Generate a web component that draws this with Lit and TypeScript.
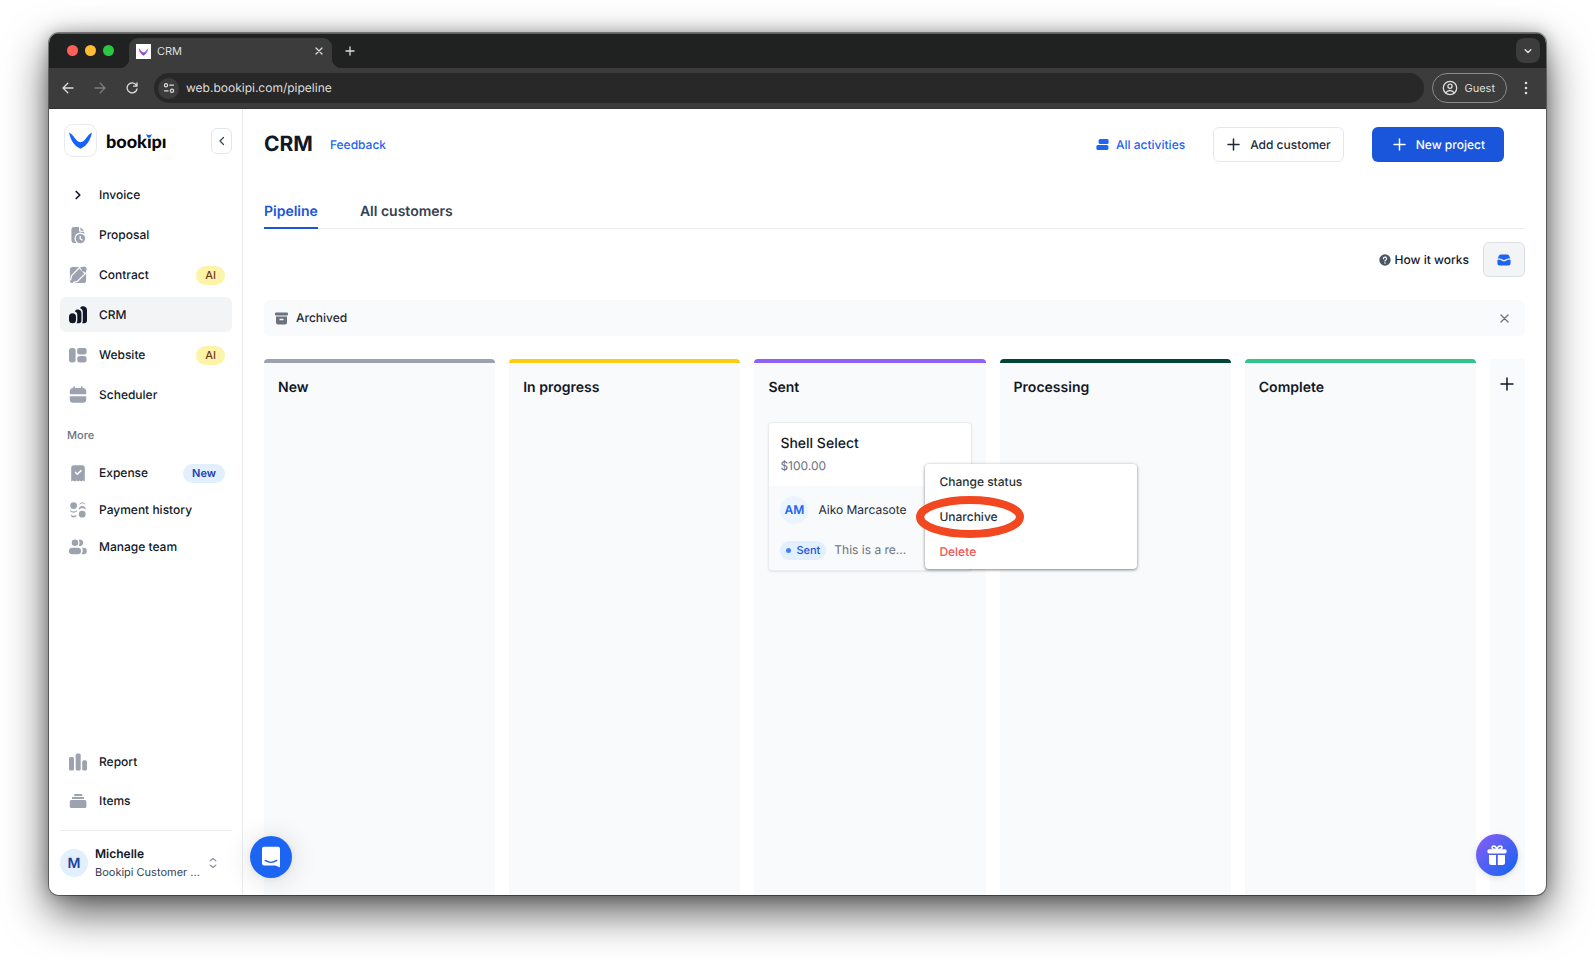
import { LitElement, html, css, svg, nothing } from "lit";
import { customElement } from "lit/decorators.js";
import { classMap } from "lit/directives/class-map.js";
import { styleMap } from "lit/directives/style-map.js";

const base = css`
  *, *::before, *::after { box-sizing: border-box; }
  :host { font-family: Inter, "Liberation Sans", sans-serif; color: #111827; text-rendering: geometricPrecision; }
  a { color: inherit; text-decoration: none; }
  button { font: inherit; color: inherit; margin: 0; padding: 0; border: 0; background: none; cursor: pointer; text-rendering: inherit; }
  h1, h2, h3, p, ul { margin: 0; padding: 0; list-style: none; }
  svg { display: block; flex: none; }
`;

const icon = (size: number, body: unknown, stroke = 0) => html`<svg
  width=${size} height=${size} viewBox="0 0 ${size} ${size}" aria-hidden="true"
  fill=${stroke ? "none" : "currentColor"} stroke=${stroke ? "currentColor" : "none"}
  stroke-width=${stroke || 0} stroke-linecap="round" stroke-linejoin="round">${body}</svg>`;

const plus = (size: number, weight = 1.6) =>
  icon(size, svg`<path d="M${size / 2} 1V${size - 1}M1 ${size / 2}H${size - 1}"/>`, weight);

const cross = (size: number, weight = 1.5) =>
  icon(size, svg`<path d="M1 1L${size - 1} ${size - 1}M${size - 1} 1L1 ${size - 1}"/>`, weight);

const navIcons: Record<string, unknown> = {
  invoice: icon(18, svg`<path d="M7.2 5.5L10.8 9L7.2 12.5"/>`, 1.7),
  proposal: icon(18, svg`
    <path d="M4.800 1H10v3.200c0 1 .6 1.600 1.600 1.600H15.200V17H4.800A2.400 2.400 0 0 1 2.400 14.600V3.400A2.400 2.400 0 0 1 4.800 1z"/>
    <path d="M11.400 1.200L15 4.700H12.200a.8.8 0 0 1-.8-.8z"/>
    <circle cx="11.400" cy="12.400" r="5.900" fill="#fff"/>
    <circle cx="11.400" cy="12.600" r="4.700"/>
    <path d="M11.200 10.300V12.800L13.200 14" fill="none" stroke="#fff" stroke-width="1.300"/>`),
  contract: icon(18, svg`
    <rect x="0.900" y="0.900" width="16.200" height="16.200" rx="2.600"/>
    <path d="M12.200 -.2L2.600 9.600L1.600 13.800M4.600 16.400L8.400 15.400L18.200 5.600" fill="none" stroke="#fff" stroke-width="1.300"/>
    <path d="M10.900 2.400L15.600 7.100" stroke="#fff" stroke-width="1.100"/>
    <circle cx="15" cy="3" r="2.600"/>`),
  crm: icon(18, svg`
    <rect x="0" y="7.200" width="7" height="10" rx="3.500"/>
    <path d="M7 3.900C8 3.300 12.400 3 12.400 7.400V14.500C12.400 16.600 11.200 17.200 9.600 17.200H7.600C8.300 16 8.300 15 8.300 14V9C8.300 7 7.600 5.800 5.800 5.400C6 4.800 6.400 4.200 7 3.900z"/>
    <path d="M12.200 .8C14.500 -.3 18 .6 18 4V14.200C18 16.500 16.800 17.200 15.400 17.200H13.200C13.700 16.200 13.800 15.400 13.800 14.500V6.500C13.800 4 12.700 2.800 11 2.300C11.200 1.700 11.600 1.100 12.200 .8z"/>`),
  website: icon(18, svg`
    <rect x="0" y="2" width="6.600" height="14.400" rx="2.600"/>
    <rect x="8.200" y="2" width="9.400" height="6.400" rx="1.800"/>
    <rect x="8.200" y="10" width="9.400" height="6.400" rx="2.600"/>`),
  scheduler: icon(18, svg`
    <path d="M4.300 1.200a.9.900 0 0 1 1.800 0v.9h5.800v-.9a.9.900 0 0 1 1.800 0v.9A3 3 0 0 1 17.200 5V8.200H.8V5A3 3 0 0 1 4.300 2.100z"/>
    <path d="M.8 10.200H17.200V13.500A3.200 3.200 0 0 1 14 16.700H4A3.200 3.200 0 0 1 .8 13.500z"/>`),
  expense: icon(18, svg`
    <path fill-rule="evenodd" d="M4.800 1.200H13.200A2.600 2.600 0 0 1 15.800 3.800V17.400L14.100 16.500L12.400 17.400L10.700 16.500L9 17.400L7.300 16.500L5.600 17.400L3.900 16.500L2.200 17.400V3.800A2.600 2.600 0 0 1 4.800 1.200z"/>
    <path d="M6.300 8.300L8.300 10.200L12 6.600" fill="none" stroke="#fff" stroke-width="1.500"/>`),
  payment: icon(18, svg`
    <circle cx="4.600" cy="4.600" r="3.400"/><circle cx="13.200" cy="13.200" r="3.400"/>
    <path d="M1.200 9.200Q4.600 12 8 9.200V10.300Q4.600 13 1.200 10.300z"/>
    <path d="M1.500 13.400Q4.600 16 7.800 13.400Q7 16.400 4.600 16.400Q2.200 16.400 1.500 13.400z"/>
    <path d="M9.800 8.700Q13.200 5.200 16.600 8.700V7.200Q15.500 5 13.200 5Q10.900 5 9.800 7.200z"/>
    <path d="M10 4Q13.200 .6 16.400 4Q15.600 1.200 13.200 1.200Q10.800 1.200 10 4z"/>`),
  team: icon(18, svg`
    <circle cx="6" cy="4.800" r="3.300"/><rect x="0" y="9.800" width="12" height="6.400" rx="3.200"/>
    <path d="M9.800 1.700A3.300 3.300 0 1 1 9.800 7.900Q11.400 5 9.800 1.700z"/>
    <path d="M13 9.800H14.600A3.200 3.200 0 0 1 14.600 16.200H12.400Q14.800 13 13 9.800z"/>`),
  report: icon(18, svg`
    <rect x="0" y="4" width="5" height="13.600" rx="1.600"/>
    <rect x="6.700" y=".6" width="5" height="17" rx="1.600"/>
    <rect x="13.200" y="7.200" width="4.800" height="10.400" rx="1.600"/>`),
  items: icon(18, svg`
    <rect x="5.200" y="2" width="8" height="2" rx=".6"/>
    <rect x="3" y="5" width="12" height="2" rx=".6"/>
    <rect x=".8" y="8" width="16.600" height="8" rx="1.600"/>`),
};

interface NavEntry { id: string; label: string; badge?: string; }

const mainNav: NavEntry[] = [
  { id: "invoice", label: "Invoice" },
  { id: "proposal", label: "Proposal" },
  { id: "contract", label: "Contract", badge: "AI" },
  { id: "crm", label: "CRM" },
  { id: "website", label: "Website", badge: "AI" },
  { id: "scheduler", label: "Scheduler" },
];
const moreNav: NavEntry[] = [
  { id: "expense", label: "Expense", badge: "New" },
  { id: "payment", label: "Payment history" },
  { id: "team", label: "Manage team" },
];
const footNav: NavEntry[] = [
  { id: "report", label: "Report" },
  { id: "items", label: "Items" },
];

@customElement("side-nav")
export class SideNav extends LitElement {
  static styles = [base, css`
    :host { display: flex; flex-direction: column; width: 194px; flex: none; padding: 15px 10px 0 11px; border-right: 1px solid #e9ebee; background: #fff; }
    .brand { display: flex; align-items: center; height: 33px; padding-left: 4px; }
    .mark { display: grid; place-items: center; width: 33px; height: 33px; border: 1px solid #e8eaed; border-radius: 9px; }
    .word { margin-left: 9px; font: 900 18px/20px Lato, Inter, sans-serif; color: #05070c; }
    .dotted { position: relative; }
    .tick { position: absolute; left: 50%; top: 4px; margin-left: -3px; color: #1463ff; }
    .collapse { display: grid; place-items: center; width: 21px; height: 26px; margin-left: auto; border: 1px solid #e3e5e9; border-radius: 6px; color: #374151; }
    .list { display: grid; gap: 5px; margin-top: 20px; }
    .more { gap: 2px; margin-top: 12px; }
    .foot { gap: 4px; margin-top: auto; }
    .item { display: flex; align-items: center; gap: 12px; height: 35px; padding: 0 7px 0 9px; border-radius: 6px; font-size: 12px; font-weight: 500; line-height: 18px; }
    .item svg { color: #9ca3af; }
    .item.current { background: #f3f4f6; }
    .item.dark svg { color: #111827; }
    .badge { margin: 2px 0 0 auto; padding: 1px 9px; border-radius: 10px; font-size: 11px; font-weight: 500; line-height: 17px; color: #723b13; background: #fdf3a9; }
    .badge.fresh { font-weight: 600; background: #e1effe; color: #1e40af; }
    .caption { margin: 15px 0 0 7px; font-size: 11px; line-height: 16px; font-weight: 500; color: #6b7280; }
    .account { display: flex; align-items: center; margin-top: 12px; padding: 14px 14px 14px 0; border-top: 1px solid #e9ebee; text-align: left; }
    .avatar { display: grid; place-items: center; width: 28px; height: 28px; border-radius: 50%; background: #e1effe; color: #1e429f; font-size: 14px; font-weight: 600; }
    .who { flex: 1; margin-left: 7px; min-width: 0; }
    .name { display: block; font-size: 12px; line-height: 18px; font-weight: 600; }
    .org { display: block; font-size: 11px; line-height: 18px; color: #374151; }
    .account svg { color: #8b93a1; }
  `];

  private entry(e: NavEntry) {
    return html`<li><a href="#${e.id}" class=${classMap({ item: true, current: e.id === "crm", dark: e.id === "crm" || e.id === "invoice" })}>
      ${navIcons[e.id]}<span>${e.label}</span>
      ${e.badge ? html`<span class=${classMap({ badge: true, fresh: e.badge === "New" })}>${e.badge}</span>` : nothing}
    </a></li>`;
  }

  render() {
    return html`
      <div class="brand">
        <span class="mark"><svg width="23" height="17" viewBox="0 0 23 17" fill="#1463ff" aria-hidden="true">
          <path d="M.2.4C1.800 1 3.400 2.700 5 5C7 8 9 10.200 11.500 10.200S16 8 18 5C19.600 2.700 21.200 1 22.800.4C22.200 5.500 19.500 10.500 16.500 13.400C14.500 15.300 12.600 15.600 11.500 16.800C10.400 15.600 8.500 15.300 6.500 13.400C3.500 10.500.8 5.500.2.4z"/></svg></span>
        <span class="word">book<span class="dotted">ı<svg class="tick" width="6" height="4" viewBox="0 0 6 4" fill="currentColor" aria-hidden="true"><path d="M0 0Q3 2 6 0Q5.400 3 3 4Q.6 3 0 0z"/></svg></span>pı</span>
        <button class="collapse" aria-label="Collapse sidebar">${icon(10, svg`<path d="M6.500 1.500L3 5L6.500 8.500"/>`, 1.2)}</button>
      </div>
      <ul class="list">${mainNav.map((e) => this.entry(e))}</ul>
      <p class="caption">More</p>
      <ul class="list more">${moreNav.map((e) => this.entry(e))}</ul>
      <ul class="list foot">${footNav.map((e) => this.entry(e))}</ul>
      <button class="account">
        <span class="avatar">M</span>
        <span class="who"><span class="name">Michelle</span><span class="org">Bookipi Customer ...</span></span>
        ${icon(10, svg`<path d="M2.200 2.800L5 .5L7.800 2.800M2.200 7.200L5 9.500L7.800 7.200"/>`, 1.2)}
      </button>`;
  }
}

const stages = [
  { name: "New", color: "#9ca3af" },
  { name: "In progress", color: "#facc15" },
  { name: "Sent", color: "#9061f9" },
  { name: "Processing", color: "#014737" },
  { name: "Complete", color: "#31c48d" },
];

@customElement("pipeline-board")
export class PipelineBoard extends LitElement {
  static styles = [base, css`
    :host { display: grid; grid-template-columns: repeat(5, minmax(0, 1fr)) 35px; gap: 14px; }
    .column { padding: 0 14px; border-top: 4px solid; border-radius: 4px 4px 0 0; background: #f9fafb; }
    .stage { margin-top: 15px; font-size: 14px; line-height: 20px; font-weight: 600; color: #111827; }
    .card { position: relative; margin-top: 24px; border: 1px solid #e9ebef; border-radius: 4px; background: #fff; box-shadow: 0 1px 2px rgba(0, 0, 0, .08); }
    .top { padding: 10px 11px 9px; }
    .title { font-size: 14px; line-height: 22px; font-weight: 500; }
    .price { font-size: 12px; line-height: 22px; color: #6b7280; }
    .bottom { padding: 10px 11px 10px; background: #f9fafb; border-radius: 0 0 4px 4px; }
    .row { display: flex; align-items: center; font-size: 12px; line-height: 20px; }
    .avatar { display: grid; place-items: center; width: 28px; height: 28px; margin-right: 10px; border-radius: 50%; background: #ebf5ff; color: #1c64f2; font-weight: 600; }
    .person { color: #1f2937; }
    .activity { margin-top: 16px; color: #6b7280; }
    .chip { display: flex; align-items: center; gap: 5px; height: 19px; margin-right: 8px; padding: 0 6px; border-radius: 10px; background: #e1effe; color: #1a56db; font-size: 11px; font-weight: 500; }
    .chip::before { content: ""; width: 5px; height: 5px; border-radius: 50%; background: #3f83f8; }
    .menu { position: absolute; left: 156px; top: 41px; z-index: 2; width: 212px; border-radius: 4px; background: #fff; box-shadow: 0 1px 3px rgba(0, 0, 0, .45), 0 0 4px rgba(0, 0, 0, .08); }
    .option { display: block; width: 100%; height: 35px; padding: 0 14px; text-align: left; font-size: 12px; font-weight: 500; color: #263238; }
    .option.danger { color: #f05252; }
    .ring { position: absolute; left: -9px; top: 32px; pointer-events: none; }
    .add { display: grid; justify-items: center; align-content: start; padding-top: 18px; background: #f9fafb; color: #111827; }
  `];

  private card() {
    return html`<article class="card">
      <div class="top"><h3 class="title">Shell Select</h3><p class="price">$100.00</p></div>
      <div class="bottom">
        <div class="row"><span class="avatar">AM</span><span class="person">Aiko Marcasote</span></div>
        <div class="row activity"><span class="chip">Sent</span><span>This is a re...</span></div>
      </div>
      <div class="menu" role="menu">
        <button class="option" role="menuitem">Change status</button>
        <button class="option" role="menuitem">Unarchive</button>
        <button class="option danger" role="menuitem">Delete</button>
        <svg class="ring" width="108" height="42" viewBox="0 0 108 42" fill="none" stroke="#f24822" stroke-width="8" aria-hidden="true"><ellipse cx="54" cy="21" rx="50" ry="17"/></svg>
      </div>
    </article>`;
  }

  render() {
    return html`
      ${stages.map((s) => html`<section class="column" style=${styleMap({ borderTopColor: s.color })}>
        <h2 class="stage">${s.name}</h2>${s.name === "Sent" ? this.card() : nothing}</section>`)}
      <button class="add" aria-label="Add stage">${plus(14, 1.5)}</button>`;
  }
}

@customElement("browser-bar")
export class BrowserBar extends LitElement {
  static styles = [base, css`
    :host { display: block; color: #dcdcdc; }
    .strip { display: flex; align-items: flex-end; height: 35px; padding: 0 6px 0 18px; background: #202221; box-shadow: inset 0 1px 0 #5d605f; }
    .lights { display: flex; align-items: center; gap: 7px; height: 35px; }
    .light { width: 11px; height: 11px; border-radius: 50%; }
    .light.red { background: #ff5f57; } .light.amber { background: #febc2e; } .light.green { background: #28c840; }
    .tab { position: relative; display: flex; align-items: center; width: 203px; height: 30px; margin-left: 15px; padding: 0 9px 4px 7px; border-radius: 9px 9px 0 0; background: #3c3c3c; font-size: 11px; line-height: 16px; }
    .tab::before, .tab::after { content: ""; position: absolute; bottom: 0; width: 9px; height: 9px; }
    .tab::before { left: -9px; background: radial-gradient(circle at 0 0, transparent 9px, #3c3c3c 9px); }
    .tab::after { right: -9px; background: radial-gradient(circle at 100% 0, transparent 9px, #3c3c3c 9px); }
    .favicon { margin-right: 6px; }
    .close { margin-left: auto; }
    .fresh { align-self: center; margin-left: 13px; }
    .tabs { display: grid; place-items: center; align-self: center; width: 24px; height: 25px; margin-left: auto; border-radius: 8px; background: #3c3c3c; }
    .tools { display: flex; align-items: center; height: 41px; padding: 0 18px 0 13px; background: #3c3c3c; border-bottom: 1px solid #333; }
    .nav { margin-right: 20px; }
    .nav.dim { color: #7d7d7d; }
    .address { display: flex; align-items: center; flex: 1; height: 30px; margin: 0 8px 0 -4px; padding: 0 14px 0 4px; border-radius: 15px; background: #282828; }
    .site { display: grid; place-items: center; flex: none; width: 21px; height: 21px; margin-right: 7px; border-radius: 50%; background: #3c3c3c; }
    .url { flex: 1; min-width: 0; padding: 0; border: 0; outline: 0; background: none; color: #dedede; font: 400 12px/18px Inter, sans-serif; text-rendering: inherit; }
    .guest { display: flex; align-items: center; gap: 6px; height: 30px; margin-right: 17px; padding: 0 11px 0 9px; border: 1px solid #8a8a8a; border-radius: 15px; font-size: 11px; line-height: 16px; }
  `];

  render() {
    return html`
      <div class="strip">
        <div class="lights"><span class="light red"></span><span class="light amber"></span><span class="light green"></span></div>
        <div class="tab">
          <svg class="favicon" width="15" height="15" viewBox="0 0 15 15" aria-hidden="true">
            <defs><linearGradient id="fav" x1="0" x2="1"><stop offset="0" stop-color="#d946c8"/><stop offset=".5" stop-color="#7c4fc4"/><stop offset="1" stop-color="#8f8df0"/></linearGradient></defs>
            <rect width="15" height="15" fill="#fff"/><path fill="url(#fav)" d="M2.600 4.200Q4 5 5 6.700Q6.200 8.500 7.500 8.500T10 6.700Q11 5 12.400 4.200Q11.800 8.500 9.500 10.300Q8.300 11 7.500 11.800Q6.700 11 5.500 10.300Q3.200 8.500 2.600 4.200z"/></svg>
          <span>CRM</span>
          <button class="close" aria-label="Close tab">${cross(8, 1.3)}</button>
        </div>
        <button class="fresh" aria-label="New tab">${plus(10, 1.3)}</button>
        <button class="tabs" aria-label="Search tabs">${icon(8, svg`<path d="M1.200 2.800L4 5.500L6.800 2.800"/>`, 1.5)}</button>
      </div>
      <div class="tools">
        <button class="nav" aria-label="Back">${icon(12, svg`<path d="M11 6H1.200M5.800 1.200L1 6L5.800 10.800"/>`, 1.3)}</button>
        <button class="nav dim" aria-label="Forward">${icon(12, svg`<path d="M1 6H10.800M6.200 1.200L11 6L6.200 10.800"/>`, 1.3)}</button>
        <button class="nav" aria-label="Reload">${icon(12, svg`<path d="M10.200 3A5 5 0 1 0 11 7M11 .8V4.200H7.600"/>`, 1.3)}</button>
        <div class="address">
          <span class="site">${icon(12, svg`<circle cx="3" cy="3.200" r="1.600"/><path d="M6.800 3.200H10.500M1.500 8.800H5.200"/><circle cx="9" cy="8.800" r="1.600"/>`, 1.2)}</span>
          <input class="url" type="text" aria-label="Address" .value=${"web.bookipi.com/pipeline"} />
        </div>
        <button class="guest">${icon(16, svg`<circle cx="8" cy="8" r="6.700"/><circle cx="8" cy="6.300" r="2.100"/><path d="M3.600 12.800Q5.600 10.500 8 10.500T12.400 12.800"/>`, 1.3)}<span>Guest</span></button>
        <button aria-label="Browser menu"><svg width="4" height="14" viewBox="0 0 4 14" fill="currentColor" aria-hidden="true"><circle cx="2" cy="2" r="1.300"/><circle cx="2" cy="7" r="1.300"/><circle cx="2" cy="12" r="1.300"/></svg></button>
      </div>`;
  }
}

@customElement("app-root")
export class AppRoot extends LitElement {
  static styles = [base, css`
    :host { display: flex; min-height: 100vh; padding: 33px 49px 65px; background: #fff; box-sizing: border-box; }
    .window { display: flex; flex-direction: column; flex: 1; min-width: 0; overflow: hidden; border-radius: 10px; background: #fff;
      box-shadow: 0 0 0 1px rgba(0, 0, 0, .4), 0 0 16px rgba(0, 0, 0, .28), 0 17px 44px rgba(0, 0, 0, .66); }
    .body { display: flex; flex: 1; }
    .main { position: relative; display: flex; flex-direction: column; flex: 1; min-width: 0; padding: 18px 21px 0; }
    .head { display: flex; align-items: center; height: 35px; padding-right: 21px; }
    .heading { font-size: 21px; line-height: 28px; font-weight: 700; }
    .link { display: flex; align-items: center; gap: 7px; font-size: 12px; line-height: 18px; font-weight: 500; color: #1c64f2; }
    .feedback { margin-left: 17px; }
    .activities { margin-left: auto; }
    .action { display: flex; align-items: center; gap: 10px; height: 35px; margin-left: 28px; border-radius: 6px; font-size: 12px; font-weight: 500; }
    .outline { padding: 0 12px 0 13px; border: 1px solid #e5e7eb; color: #1f2937; }
    .solid { padding: 0 19px 0 21px; background: #1a56db; color: #fff; }
    .tabs { display: flex; gap: 42px; margin-top: 40px; border-bottom: 1px solid #e9ebee; font-size: 14px; line-height: 20px; font-weight: 600; color: #374151; }
    .tab { padding-bottom: 5px; margin-bottom: -1px; border-bottom: 2px solid transparent; }
    .tab.active { color: #1a56db; border-color: #1a56db; }
    .tools { display: flex; align-items: center; justify-content: flex-end; gap: 14px; margin-top: 13px; }
    .help { display: flex; align-items: center; gap: 4px; font-size: 12px; line-height: 18px; font-weight: 500; }
    .help svg { color: #4b5563; }
    .inbox { display: grid; place-items: center; width: 42px; height: 35px; border: 1px solid #dcdfe4; border-radius: 6px; background: #f3f4f6; color: #1c64f2; }
    .banner { display: flex; align-items: center; gap: 8px; height: 36px; margin: 23px 0; padding: 0 16px 0 11px; border-radius: 6px; background: #f9fafb; font-size: 12px; line-height: 18px; font-weight: 500; color: #1f2937; }
    .banner svg { color: #6b7280; }
    .dismiss { margin-left: auto; }
    .board { flex: 1; }
    .float { position: absolute; z-index: 3; display: grid; place-items: center; width: 42px; height: 42px; border-radius: 50%; color: #fff; }
    .chat { left: 7px; bottom: 17px; background: #1c64f2; box-shadow: 0 1px 6px rgba(0, 0, 0, .06), 0 2px 28px rgba(0, 0, 0, .14); }
    .gift { right: 28px; bottom: 19px; background: linear-gradient(135deg, #8b5cf6, #1c64f2 90%); box-shadow: 0 2px 6px rgba(0, 0, 0, .12); }
  `];

  render() {
    return html`<div class="window">
      <browser-bar></browser-bar>
      <div class="body">
        <side-nav></side-nav>
        <main class="main">
          <header class="head">
            <h1 class="heading">CRM</h1>
            <a class="link feedback" href="#feedback">Feedback</a>
            <a class="link activities" href="#activities">${icon(13, svg`<rect x="2.600" y="1" width="10" height="5" rx="1.500"/><rect x=".4" y="7" width="12" height="5" rx="1.500"/>`)}All activities</a>
            <button class="action outline">${plus(13, 1.5)}Add customer</button>
            <button class="action solid">${plus(13, 1.5)}New project</button>
          </header>
          <nav class="tabs"><a class="tab active" href="#pipeline">Pipeline</a><a class="tab" href="#customers">All customers</a></nav>
          <div class="tools">
            <a class="help" href="#help"><svg width="12" height="12" viewBox="0 0 12 12" aria-hidden="true"><circle cx="6" cy="6" r="5.700" fill="currentColor"/><path d="M4.400 4.700A1.600 1.500 0 1 1 6.700 6Q6 6.300 6 7" fill="none" stroke="#fff" stroke-width="1.200" stroke-linecap="round"/><circle cx="6" cy="9" r=".8" fill="#fff"/></svg>How it works</a>
            <button class="inbox" aria-label="Archived projects">${icon(14, svg`<path d="M4 1.500H10Q11.600 1.500 12.200 2.900L13.200 5.600H11.200Q9.800 5.600 9 6.300Q7 7.700 5 6.300Q4.200 5.600 2.800 5.600H.8L1.800 2.900Q2.400 1.500 4 1.500z"/><path d="M.4 6.800H3Q3.800 6.800 4.500 7.400Q7 9.200 9.500 7.400Q10.200 6.800 11 6.800H13.600V10.300Q13.600 12.500 11.400 12.500H2.600Q.4 12.500 .4 10.300z"/>`)}</button>
          </div>
          <div class="banner">
            <svg width="13" height="13" viewBox="0 0 13 13" fill="currentColor" aria-hidden="true"><rect x="0" y=".5" width="13" height="3" rx="1"/><path fill-rule="evenodd" d="M1 4.600H12V10.500Q12 12.400 10.100 12.400H2.900Q1 12.400 1 10.500zM4.500 6.800V8.200H8.500V6.800z"/></svg>
            <span>Archived</span>
            <button class="dismiss" aria-label="Close archived view">${cross(9, 1.3)}</button>
          </div>
          <pipeline-board class="board"></pipeline-board>
          <button class="float chat" aria-label="Open chat"><svg width="20" height="22" viewBox="0 0 20 22" aria-hidden="true"><path fill="#fff" d="M3 .8H17A2 2 0 0 1 19 2.800V21.500L14.500 19.500H3A2 2 0 0 1 1 17.500V2.800A2 2 0 0 1 3 .8z"/><path d="M4.200 14.400Q10 18.200 15.800 14.400" fill="none" stroke="#1c64f2" stroke-width="1.300" stroke-linecap="round"/></svg></button>
          <button class="float gift" aria-label="Rewards"><svg width="20" height="20" viewBox="0 0 20 20" fill="#fff" aria-hidden="true"><rect x=".4" y="4.200" width="19.200" height="4.200" rx="1.600"/><path d="M2 10H9V20H4.500Q2 20 2 17.500zM10.800 10H18V17.500Q18 20 15.500 20H10.800z"/><path d="M9.800 4.500Q9 1 6.800 1Q5 1 5 2.700Q5 4.500 9.800 4.500Q15 4.500 15 2.700Q15 1 13 1Q10.800 1 9.800 4.500z" fill="none" stroke="#fff" stroke-width="1.500"/></svg></button>
        </main>
      </div>
    </div>`;
  }
}
